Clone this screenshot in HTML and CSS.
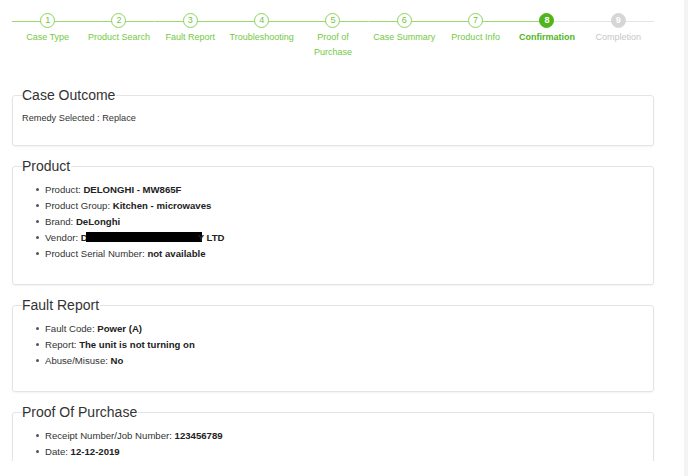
FILE: index.html
```html
<!DOCTYPE html>
<html lang="en">
<head>
    <meta charset="UTF-8">
    <title>Case Confirmation</title>
    <link rel="stylesheet" href="styles.css">
</head>
<body>
    <div class="layout">
        <div class="page">
            <div class="stepper">
                <div class="step done"><div class="dot-row"><span class="dot">1</span></div><div class="label">Case Type</div></div>
                <div class="step done"><div class="dot-row"><span class="dot">2</span></div><div class="label">Product Search</div></div>
                <div class="step done"><div class="dot-row"><span class="dot">3</span></div><div class="label">Fault Report</div></div>
                <div class="step done"><div class="dot-row"><span class="dot">4</span></div><div class="label">Troubleshooting</div></div>
                <div class="step done"><div class="dot-row"><span class="dot">5</span></div><div class="label">Proof of<br>Purchase</div></div>
                <div class="step done"><div class="dot-row"><span class="dot">6</span></div><div class="label">Case Summary</div></div>
                <div class="step done"><div class="dot-row"><span class="dot">7</span></div><div class="label">Product Info</div></div>
                <div class="step current"><div class="dot-row"><span class="dot">8</span></div><div class="label">Confirmation</div></div>
                <div class="step todo"><div class="dot-row"><span class="dot">9</span></div><div class="label">Completion</div></div>
            </div>

            <fieldset class="panel">
                <legend>Case Outcome</legend>
                <p class="outcome">Remedy Selected : Replace</p>
            </fieldset>

            <fieldset class="panel">
                <legend>Product</legend>
                <ul class="details">
                    <li>Product: <b>DELONGHI - MW865F</b></li>
                    <li>Product Group: <b>Kitchen - microwaves</b></li>
                    <li>Brand: <b>DeLonghi</b></li>
                    <li>Vendor: <b>D<span class="redact"></span>Y LTD</b></li>
                    <li>Product Serial Number: <b>not available</b></li>
                </ul>
            </fieldset>

            <fieldset class="panel">
                <legend>Fault Report</legend>
                <ul class="details">
                    <li>Fault Code: <b>Power (A)</b></li>
                    <li>Report: <b>The unit is not turning on</b></li>
                    <li>Abuse/Misuse: <b>No</b></li>
                </ul>
            </fieldset>

            <fieldset class="panel">
                <legend>Proof Of Purchase</legend>
                <ul class="details">
                    <li>Receipt Number/Job Number: <b>123456789</b></li>
                    <li>Date: <b>12-12-2019</b></li>
                </ul>
            </fieldset>
        </div>
        <div class="scroll-track"></div>
    </div>
</body>
</html>
```

FILE: styles.css
```css
body {
    margin: 0;
    font-family: "Liberation Sans", Arial, sans-serif;
    color: #333;
    background: #fff;
}

.layout {
    display: flex;
    height: 476px;
}

.page {
    width: 642px;
    padding: 0 30px 0 12px;
    height: 461px;
    overflow: hidden;
}

.scroll-track {
    width: 4px;
    background: #f4f4f4;
}

/* stepper */
.stepper {
    display: flex;
    padding-top: 13px;
    margin-bottom: 27px;
}

.step {
    flex: 1;
    text-align: center;
}

.dot-row {
    height: 16px;
    display: flex;
    justify-content: center;
    background: linear-gradient(#9bd86f, #9bd86f) center / 100% 1px no-repeat;
}

.step.current .dot-row {
    background: linear-gradient(to right, #9bd86f 50%, #e4e4e4 50%) center / 100% 1px no-repeat;
}

.step.todo .dot-row {
    background: linear-gradient(#e4e4e4, #e4e4e4) center / 100% 1px no-repeat;
}

.dot {
    width: 13px;
    height: 13px;
    border: 1.5px solid #8bd35a;
    border-radius: 50%;
    background: #fff;
    color: #6fc63c;
    font-size: 9px;
    line-height: 13px;
}

.step.current .dot {
    background: #4fb51a;
    border-color: #4fb51a;
    color: #fff;
    font-weight: bold;
}

.step.todo .dot {
    background: #d6d6d6;
    border-color: #d6d6d6;
    color: #fff;
    font-weight: bold;
}

.label {
    font-size: 9px;
    line-height: 15px;
    margin-top: 1px;
    color: #74c943;
}

.step.current .label {
    color: #4fb51a;
    font-weight: bold;
}

.step.todo .label {
    color: #c6c6c6;
}

/* panels */
.panel {
    margin: 0 0 12px;
    padding: 0 9px;
    border: 1px solid #e4e4e4;
    border-radius: 3px;
    box-shadow: 0 1px 2px rgba(0, 0, 0, 0.05);
}

.panel legend {
    font-size: 14px;
    line-height: 16px;
    padding: 0 1px 0 0;
    color: #333;
}

.outcome {
    margin: 0;
    padding: 7px 0 19px;
    font-size: 9.2px;
    line-height: 16px;
}

.details {
    margin: 0;
    padding: 8px 0 22px 14px;
    list-style: none;
    font-size: 9.6px;
    line-height: 16px;
}

.details li::before {
    content: "";
    display: inline-block;
    width: 3px;
    height: 3px;
    border-radius: 50%;
    background: #555;
    vertical-align: 2px;
    margin-right: 6px;
}

.details b {
    color: #222;
}

.redact {
    display: inline-block;
    width: 116px;
    height: 10px;
    background: #000;
    vertical-align: -1px;
    margin: 0 -4px 0 -2px;
}
```
